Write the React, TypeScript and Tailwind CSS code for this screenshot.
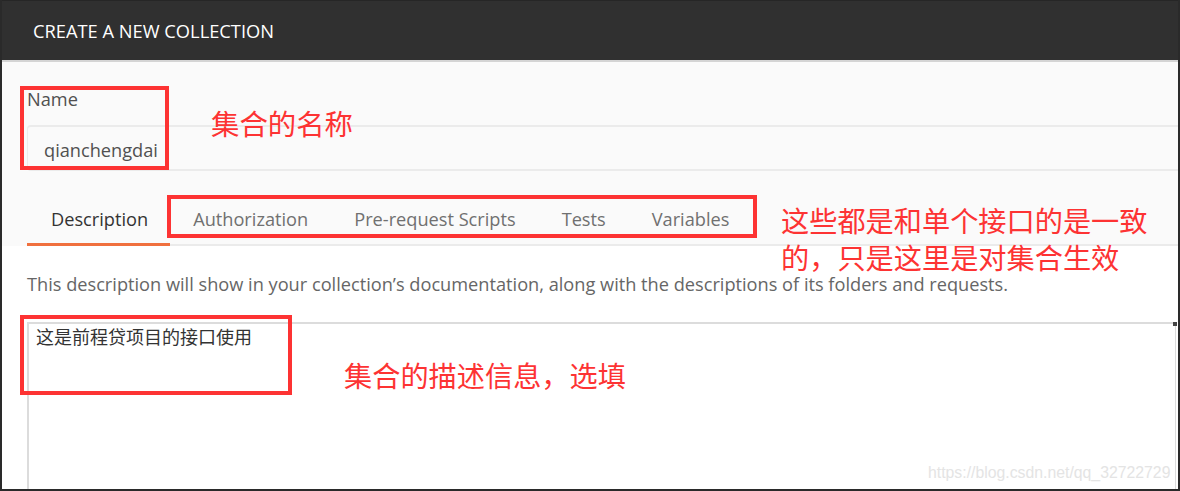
export default function App() {
  const tabs = ["Authorization", "Pre-request Scripts", "Tests", "Variables"];
  const cjk = { fontFamily: '"Noto Sans CJK SC", sans-serif' };
  return (
    <div
      className="relative w-[1180px] h-[491px] overflow-hidden border-l-2 border-r-2 border-b-2 border-[#2a2a2a] bg-white flex flex-col"
      style={{ fontFamily: '"Open Sans", "Noto Sans CJK SC", sans-serif' }}
    >
      <div className="h-[62px] shrink-0 bg-[#303030] border-t border-[#262626] border-b-2 border-b-[#d4d4d4] flex items-center pl-[31px]">
        <span className="text-[18.3px] leading-[24px] text-white mt-[1px]">CREATE A NEW COLLECTION</span>
      </div>
      <div className="bg-[#fafafa] flex flex-col pl-[25px]">
        <div className="pt-[26px] text-[18.2px] text-[#505050] leading-[22px]">Name</div>
        <div className="mt-[15px] h-[46px] border-y-2 border-l border-[#ebebeb] rounded-l-[4px] flex items-center pl-[16px]">
          <span className="text-[18.2px] leading-[24px] text-[#505050] mt-[4px]">qianchengdai</span>
        </div>
        <div className="flex mt-[19px] h-[56px] items-stretch border-b-2 border-[#ebebeb]">
          <div className="pl-[24px] pr-[22px] pt-[6px] flex items-center text-[18.2px] text-[#333] border-b-[3px] border-[#f0703e] -mb-[2px]">
            Description
          </div>
          {tabs.map((t) => (
            <div key={t} className="px-[23px] pt-[5px] flex items-center text-[18.2px] text-[#707070]">
              {t}
            </div>
          ))}
        </div>
      </div>
      <div className="flex-1 flex flex-col pl-[25px] bg-white">
        <div className="pt-[27px] text-[18.2px] text-[#666] leading-[22px]">
          This description will show in your collection’s documentation, along with the descriptions of its folders and requests.
        </div>
        <div className="mt-[27px] flex-1 border-t-2 border-l-2 border-r border-[#dcdcdc] mr-[2px] pl-[7px] pt-[2px] relative">
          <div className="text-[18px] leading-[24px] text-[#333]" style={{ fontFamily: '"Liberation Serif", "Noto Sans CJK SC", serif' }}>
            这是前程贷项目的接口使用
          </div>
          <div className="absolute -right-[2px] -top-[2px] w-[4px] h-[4px] bg-[#444]" />
        </div>
      </div>

      {/* annotations */}
      <div className="absolute left-[18px] top-[86px] w-[149px] h-[84px] border-[4px] border-[#fd3333]" />
      <div className="absolute left-[209px] top-[104px] text-[28.4px] leading-[38px] text-[#fd3333]" style={cjk}>
        集合的名称
      </div>
      <div className="absolute left-[165px] top-[195px] w-[590px] h-[43px] border-[4px] border-[#fd3333]" />
      <div className="absolute left-[779px] top-[201px] text-[28.2px] leading-[37px] text-[#fd3333]" style={cjk}>
        这些都是和单个接口的是一致
        <br />
        的，只是这里是对集合生效
      </div>
      <div className="absolute left-[18px] top-[315px] w-[272px] h-[80px] border-[4px] border-[#fd3333]" />
      <div className="absolute left-[342px] top-[356px] text-[28.2px] leading-[38px] text-[#fd3333]" style={cjk}>
        集合的描述信息，选填
      </div>
      <div
        className="absolute left-[926px] top-[461px] text-[15.8px] text-[#e4e4e4]"
        style={{ fontFamily: '"Liberation Sans", sans-serif' }}
      >
        https://blog.csdn.net/qq_32722729
      </div>
    </div>
  );
}
